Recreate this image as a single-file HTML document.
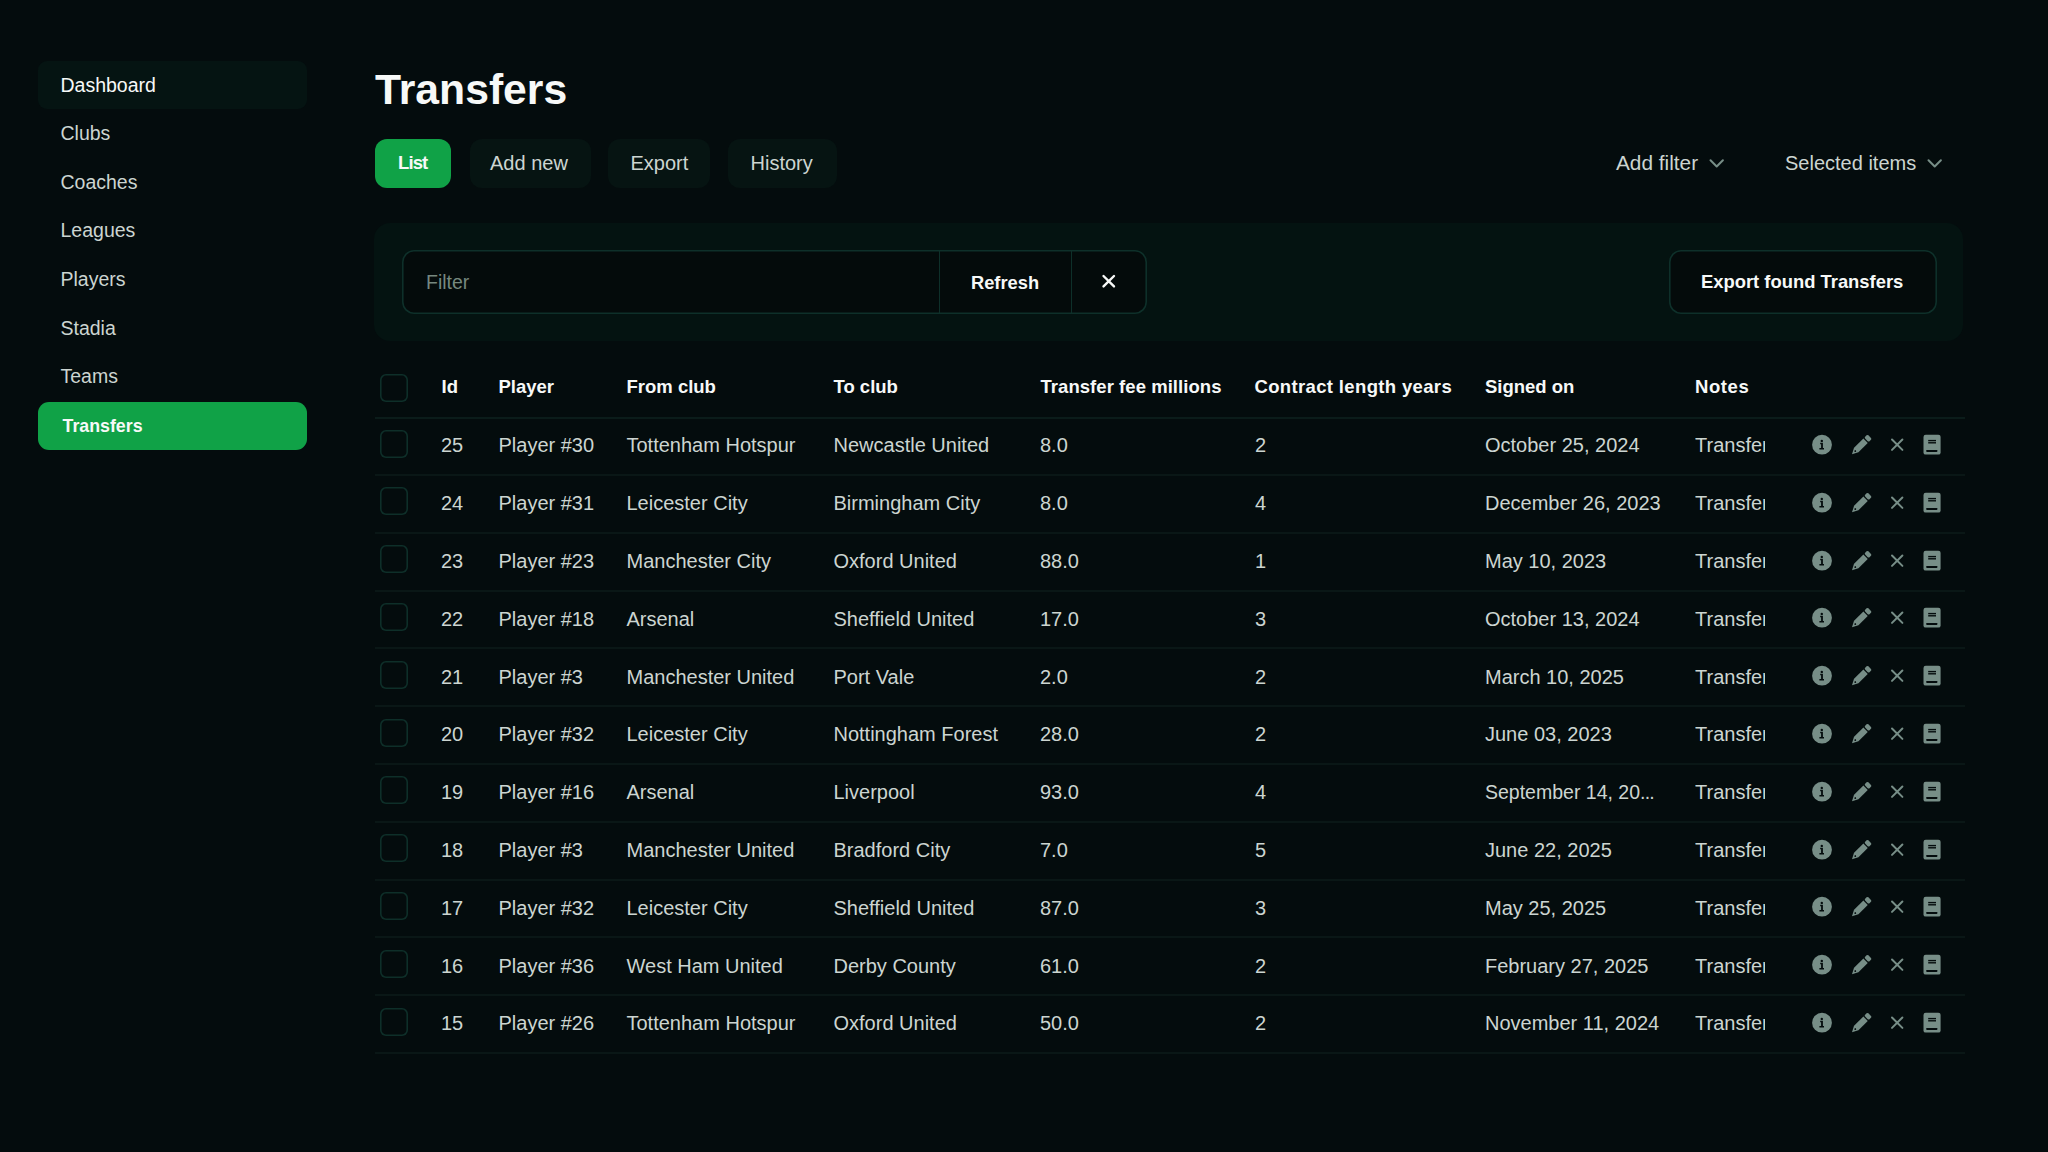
<!DOCTYPE html>
<html><head><meta charset="utf-8"><style>
html,body{margin:0;padding:0;}
body{width:2048px;height:1152px;background:#040c0d;position:relative;overflow:hidden;font-family:"Liberation Sans",sans-serif;}
.t{position:absolute;line-height:1;white-space:nowrap;}
.r{position:absolute;box-sizing:border-box;}
</style></head><body>
<svg width="0" height="0" style="position:absolute"><defs><g id="icons">
<circle cx="22" cy="14.7" r="9.9" fill="#778e87"/>
<circle cx="21.8" cy="10.9" r="1.2" fill="#040c0d"/>
<path d="M20.2 12.8 H22.9 V18 H24 V19.4 H19.4 V18 H21.1 V14.2 H20.2 Z" fill="#040c0d"/>
<g transform="translate(52,24.3) rotate(-45)">
<path d="M0 0 L6 -3.1 L19.2 -3.1 L19.2 3.1 L6 3.1 Z" fill="#778e87"/>
<rect x="20.4" y="-3.1" width="4.6" height="6.2" rx="1.3" fill="#778e87"/>
<circle cx="4.6" cy="0" r="0.9" fill="#040c0d"/>
</g>
<path d="M92 9.5 L102.4 19.9 M102.4 9.5 L92 19.9" stroke="#778e87" stroke-width="2" stroke-linecap="round"/>
<rect x="123.5" y="4.8" width="17.1" height="19.8" rx="2.2" fill="#778e87"/>
<rect x="128.2" y="9.9" width="7.8" height="1.4" fill="#040c0d"/>
<rect x="128.2" y="12.1" width="7.8" height="1.4" fill="#040c0d"/>
<rect x="126.1" y="19.9" width="11.4" height="2" rx="0.8" fill="#040c0d"/>
</g></defs></svg>
<div class="r" style="left:38px;top:61px;width:269px;height:48px;background:#051412;border-radius:9px;"></div>
<div class="r" style="left:38px;top:402px;width:269px;height:48px;background:#10a247;border-radius:11px;"></div>
<div class="t" style="left:60.5px;top:75.5px;font-size:19.5px;color:#f7f9f8;">Dashboard</div>
<div class="t" style="left:60.5px;top:124.1px;font-size:19.5px;color:#ccd5d1;">Clubs</div>
<div class="t" style="left:60.5px;top:172.8px;font-size:19.5px;color:#ccd5d1;">Coaches</div>
<div class="t" style="left:60.5px;top:221.4px;font-size:19.5px;color:#ccd5d1;">Leagues</div>
<div class="t" style="left:60.5px;top:270.0px;font-size:19.5px;color:#ccd5d1;">Players</div>
<div class="t" style="left:60.5px;top:318.7px;font-size:19.5px;color:#ccd5d1;">Stadia</div>
<div class="t" style="left:60.5px;top:367.3px;font-size:19.5px;color:#ccd5d1;">Teams</div>
<div class="t" style="left:62.5px;top:418.4px;font-size:17.8px;font-weight:700;color:#f7f9f8;">Transfers</div>
<div class="t" style="left:375.0px;top:67.8px;font-size:42.7px;font-weight:700;color:#f7f9f8;">Transfers</div>
<div class="r" style="left:375px;top:139px;width:76px;height:49px;background:#10a247;border-radius:12px;"></div>
<div class="t" style="left:398.0px;top:154.3px;font-size:18.5px;font-weight:700;color:#f7f9f8;letter-spacing:-0.9px">List</div>
<div class="r" style="left:470px;top:139px;width:121px;height:49px;background:#061412;border-radius:12px;"></div>
<div class="t" style="left:490.0px;top:153.1px;font-size:20px;color:#ccd5d1;">Add new</div>
<div class="r" style="left:608px;top:139px;width:102px;height:49px;background:#061412;border-radius:12px;"></div>
<div class="t" style="left:630.5px;top:153.1px;font-size:20px;color:#ccd5d1;">Export</div>
<div class="r" style="left:728px;top:139px;width:109px;height:49px;background:#061412;border-radius:12px;"></div>
<div class="t" style="left:750.5px;top:153.1px;font-size:20px;color:#ccd5d1;">History</div>
<div class="t" style="left:1616.0px;top:153.4px;font-size:20.8px;color:#ccd5d1;">Add filter</div>
<div class="t" style="left:1785.0px;top:153.1px;font-size:20px;color:#ccd5d1;">Selected items</div>
<svg class="r" style="left:1709px;top:158px" width="16" height="10" viewBox="0 0 16 10"><path d="M1.5 2.3 L7.7 8.5 L13.9 2.3" fill="none" stroke="#778e87" stroke-width="2" stroke-linecap="round" stroke-linejoin="round"/></svg>
<svg class="r" style="left:1927px;top:158px" width="16" height="10" viewBox="0 0 16 10"><path d="M1.5 2.3 L7.7 8.5 L13.9 2.3" fill="none" stroke="#778e87" stroke-width="2" stroke-linecap="round" stroke-linejoin="round"/></svg>
<div class="r" style="left:374px;top:223px;width:1589px;height:118px;background:#041311;border-radius:16px;"></div>
<div class="r" style="left:402px;top:250px;width:745px;height:64px;box-shadow:inset 0 0 0 1.6px #0e302a;border-radius:12px;background:#040b0b;"></div>
<div class="r" style="left:938.5px;top:251px;width:1.5px;height:62px;background:#0e302a;border-radius:0px;"></div>
<div class="r" style="left:1070.5px;top:251px;width:1.5px;height:62px;background:#0e302a;border-radius:0px;"></div>
<div class="t" style="left:426.0px;top:272.5px;font-size:19.5px;color:#76887f;">Filter</div>
<div class="t" style="left:971.0px;top:273.5px;font-size:18.3px;font-weight:700;color:#f7f9f8;">Refresh</div>
<svg class="r" style="left:1100px;top:273px" width="17" height="16" viewBox="0 0 17 16"><path d="M3.5 3 L14 13.4 M14 3 L3.5 13.4" fill="none" stroke="#f7f9f8" stroke-width="2.4" stroke-linecap="round"/></svg>
<div class="r" style="left:1669px;top:250px;width:268px;height:64px;box-shadow:inset 0 0 0 1.6px #0e302a;border-radius:12px;background:#040b0b;"></div>
<div class="t" style="left:1701.0px;top:273.4px;font-size:18.4px;font-weight:700;color:#f7f9f8;">Export found Transfers</div>
<div class="r" style="left:380px;top:373.5px;width:28px;height:28px;box-shadow:inset 0 0 0 1.6px #0e2f29;border-radius:6px;"></div>
<div class="t" style="left:441.5px;top:377.8px;font-size:18.5px;font-weight:700;color:#f7f9f8;letter-spacing:0.1px">Id</div>
<div class="t" style="left:498.5px;top:377.8px;font-size:18.5px;font-weight:700;color:#f7f9f8;letter-spacing:0px">Player</div>
<div class="t" style="left:626.5px;top:377.8px;font-size:18.5px;font-weight:700;color:#f7f9f8;letter-spacing:0px">From club</div>
<div class="t" style="left:833.5px;top:377.8px;font-size:18.5px;font-weight:700;color:#f7f9f8;letter-spacing:0px">To club</div>
<div class="t" style="left:1040.5px;top:377.8px;font-size:18.5px;font-weight:700;color:#f7f9f8;letter-spacing:0.05px">Transfer fee millions</div>
<div class="t" style="left:1254.5px;top:377.8px;font-size:18.5px;font-weight:700;color:#f7f9f8;letter-spacing:0.35px">Contract length years</div>
<div class="t" style="left:1485.0px;top:377.8px;font-size:18.5px;font-weight:700;color:#f7f9f8;letter-spacing:0px">Signed on</div>
<div class="t" style="left:1695.0px;top:377.8px;font-size:18.5px;font-weight:700;color:#f7f9f8;letter-spacing:0.6px">Notes</div>
<div class="r" style="left:375px;top:417px;width:1590px;height:2px;background:#0b1c1a;border-radius:0px;"></div>
<div class="r" style="left:380px;top:429.6px;width:28px;height:28px;box-shadow:inset 0 0 0 1.6px #0e2f29;border-radius:6px;"></div>
<div class="t" style="left:441.0px;top:435.3px;font-size:20px;color:#ccd5d1;">25</div>
<div class="t" style="left:498.5px;top:435.3px;font-size:20px;color:#ccd5d1;">Player #30</div>
<div class="t" style="left:626.5px;top:435.3px;font-size:20px;color:#ccd5d1;">Tottenham Hotspur</div>
<div class="t" style="left:833.5px;top:435.3px;font-size:20px;color:#ccd5d1;">Newcastle United</div>
<div class="t" style="left:1040.0px;top:435.3px;font-size:20px;color:#ccd5d1;">8.0</div>
<div class="t" style="left:1255.0px;top:435.3px;font-size:20px;color:#ccd5d1;">2</div>
<div class="t" style="left:1485.0px;top:435.3px;font-size:20px;color:#ccd5d1;">October 25, 2024</div>
<div class="t" style="left:1695.0px;top:435.3px;font-size:20px;color:#ccd5d1;width:70px;overflow:hidden;white-space:nowrap">Transfer</div>
<div class="r" style="left:375px;top:474px;width:1590px;height:2px;background:#0a1716;border-radius:0px;"></div>
<svg class="r" style="left:1800px;top:430.0px" width="160" height="30" viewBox="0 0 160 30"><use href="#icons"/></svg>
<div class="r" style="left:380px;top:487.4px;width:28px;height:28px;box-shadow:inset 0 0 0 1.6px #0e2f29;border-radius:6px;"></div>
<div class="t" style="left:441.0px;top:493.1px;font-size:20px;color:#ccd5d1;">24</div>
<div class="t" style="left:498.5px;top:493.1px;font-size:20px;color:#ccd5d1;">Player #31</div>
<div class="t" style="left:626.5px;top:493.1px;font-size:20px;color:#ccd5d1;">Leicester City</div>
<div class="t" style="left:833.5px;top:493.1px;font-size:20px;color:#ccd5d1;">Birmingham City</div>
<div class="t" style="left:1040.0px;top:493.1px;font-size:20px;color:#ccd5d1;">8.0</div>
<div class="t" style="left:1255.0px;top:493.1px;font-size:20px;color:#ccd5d1;">4</div>
<div class="t" style="left:1485.0px;top:493.1px;font-size:20px;color:#ccd5d1;">December 26, 2023</div>
<div class="t" style="left:1695.0px;top:493.1px;font-size:20px;color:#ccd5d1;width:70px;overflow:hidden;white-space:nowrap">Transfer</div>
<div class="r" style="left:375px;top:532px;width:1590px;height:2px;background:#0a1716;border-radius:0px;"></div>
<svg class="r" style="left:1800px;top:487.8px" width="160" height="30" viewBox="0 0 160 30"><use href="#icons"/></svg>
<div class="r" style="left:380px;top:545.2px;width:28px;height:28px;box-shadow:inset 0 0 0 1.6px #0e2f29;border-radius:6px;"></div>
<div class="t" style="left:441.0px;top:550.9px;font-size:20px;color:#ccd5d1;">23</div>
<div class="t" style="left:498.5px;top:550.9px;font-size:20px;color:#ccd5d1;">Player #23</div>
<div class="t" style="left:626.5px;top:550.9px;font-size:20px;color:#ccd5d1;">Manchester City</div>
<div class="t" style="left:833.5px;top:550.9px;font-size:20px;color:#ccd5d1;">Oxford United</div>
<div class="t" style="left:1040.0px;top:550.9px;font-size:20px;color:#ccd5d1;">88.0</div>
<div class="t" style="left:1255.0px;top:550.9px;font-size:20px;color:#ccd5d1;">1</div>
<div class="t" style="left:1485.0px;top:550.9px;font-size:20px;color:#ccd5d1;">May 10, 2023</div>
<div class="t" style="left:1695.0px;top:550.9px;font-size:20px;color:#ccd5d1;width:70px;overflow:hidden;white-space:nowrap">Transfer</div>
<div class="r" style="left:375px;top:590px;width:1590px;height:2px;background:#0a1716;border-radius:0px;"></div>
<svg class="r" style="left:1800px;top:545.6px" width="160" height="30" viewBox="0 0 160 30"><use href="#icons"/></svg>
<div class="r" style="left:380px;top:603.0px;width:28px;height:28px;box-shadow:inset 0 0 0 1.6px #0e2f29;border-radius:6px;"></div>
<div class="t" style="left:441.0px;top:608.7px;font-size:20px;color:#ccd5d1;">22</div>
<div class="t" style="left:498.5px;top:608.7px;font-size:20px;color:#ccd5d1;">Player #18</div>
<div class="t" style="left:626.5px;top:608.7px;font-size:20px;color:#ccd5d1;">Arsenal</div>
<div class="t" style="left:833.5px;top:608.7px;font-size:20px;color:#ccd5d1;">Sheffield United</div>
<div class="t" style="left:1040.0px;top:608.7px;font-size:20px;color:#ccd5d1;">17.0</div>
<div class="t" style="left:1255.0px;top:608.7px;font-size:20px;color:#ccd5d1;">3</div>
<div class="t" style="left:1485.0px;top:608.7px;font-size:20px;color:#ccd5d1;">October 13, 2024</div>
<div class="t" style="left:1695.0px;top:608.7px;font-size:20px;color:#ccd5d1;width:70px;overflow:hidden;white-space:nowrap">Transfer</div>
<div class="r" style="left:375px;top:647px;width:1590px;height:2px;background:#0a1716;border-radius:0px;"></div>
<svg class="r" style="left:1800px;top:603.4px" width="160" height="30" viewBox="0 0 160 30"><use href="#icons"/></svg>
<div class="r" style="left:380px;top:660.8px;width:28px;height:28px;box-shadow:inset 0 0 0 1.6px #0e2f29;border-radius:6px;"></div>
<div class="t" style="left:441.0px;top:666.5px;font-size:20px;color:#ccd5d1;">21</div>
<div class="t" style="left:498.5px;top:666.5px;font-size:20px;color:#ccd5d1;">Player #3</div>
<div class="t" style="left:626.5px;top:666.5px;font-size:20px;color:#ccd5d1;">Manchester United</div>
<div class="t" style="left:833.5px;top:666.5px;font-size:20px;color:#ccd5d1;">Port Vale</div>
<div class="t" style="left:1040.0px;top:666.5px;font-size:20px;color:#ccd5d1;">2.0</div>
<div class="t" style="left:1255.0px;top:666.5px;font-size:20px;color:#ccd5d1;">2</div>
<div class="t" style="left:1485.0px;top:666.5px;font-size:20px;color:#ccd5d1;">March 10, 2025</div>
<div class="t" style="left:1695.0px;top:666.5px;font-size:20px;color:#ccd5d1;width:70px;overflow:hidden;white-space:nowrap">Transfer</div>
<div class="r" style="left:375px;top:705px;width:1590px;height:2px;background:#0a1716;border-radius:0px;"></div>
<svg class="r" style="left:1800px;top:661.2px" width="160" height="30" viewBox="0 0 160 30"><use href="#icons"/></svg>
<div class="r" style="left:380px;top:718.6px;width:28px;height:28px;box-shadow:inset 0 0 0 1.6px #0e2f29;border-radius:6px;"></div>
<div class="t" style="left:441.0px;top:724.3px;font-size:20px;color:#ccd5d1;">20</div>
<div class="t" style="left:498.5px;top:724.3px;font-size:20px;color:#ccd5d1;">Player #32</div>
<div class="t" style="left:626.5px;top:724.3px;font-size:20px;color:#ccd5d1;">Leicester City</div>
<div class="t" style="left:833.5px;top:724.3px;font-size:20px;color:#ccd5d1;">Nottingham Forest</div>
<div class="t" style="left:1040.0px;top:724.3px;font-size:20px;color:#ccd5d1;">28.0</div>
<div class="t" style="left:1255.0px;top:724.3px;font-size:20px;color:#ccd5d1;">2</div>
<div class="t" style="left:1485.0px;top:724.3px;font-size:20px;color:#ccd5d1;">June 03, 2023</div>
<div class="t" style="left:1695.0px;top:724.3px;font-size:20px;color:#ccd5d1;width:70px;overflow:hidden;white-space:nowrap">Transfer</div>
<div class="r" style="left:375px;top:763px;width:1590px;height:2px;background:#0a1716;border-radius:0px;"></div>
<svg class="r" style="left:1800px;top:719.0px" width="160" height="30" viewBox="0 0 160 30"><use href="#icons"/></svg>
<div class="r" style="left:380px;top:776.4px;width:28px;height:28px;box-shadow:inset 0 0 0 1.6px #0e2f29;border-radius:6px;"></div>
<div class="t" style="left:441.0px;top:782.1px;font-size:20px;color:#ccd5d1;">19</div>
<div class="t" style="left:498.5px;top:782.1px;font-size:20px;color:#ccd5d1;">Player #16</div>
<div class="t" style="left:626.5px;top:782.1px;font-size:20px;color:#ccd5d1;">Arsenal</div>
<div class="t" style="left:833.5px;top:782.1px;font-size:20px;color:#ccd5d1;">Liverpool</div>
<div class="t" style="left:1040.0px;top:782.1px;font-size:20px;color:#ccd5d1;">93.0</div>
<div class="t" style="left:1255.0px;top:782.1px;font-size:20px;color:#ccd5d1;">4</div>
<div class="t" style="left:1485.0px;top:782.5px;font-size:19.5px;color:#ccd5d1;">September 14, 20<span style="letter-spacing:-0.8px">...</span></div>
<div class="t" style="left:1695.0px;top:782.1px;font-size:20px;color:#ccd5d1;width:70px;overflow:hidden;white-space:nowrap">Transfer</div>
<div class="r" style="left:375px;top:821px;width:1590px;height:2px;background:#0a1716;border-radius:0px;"></div>
<svg class="r" style="left:1800px;top:776.8px" width="160" height="30" viewBox="0 0 160 30"><use href="#icons"/></svg>
<div class="r" style="left:380px;top:834.2px;width:28px;height:28px;box-shadow:inset 0 0 0 1.6px #0e2f29;border-radius:6px;"></div>
<div class="t" style="left:441.0px;top:839.9px;font-size:20px;color:#ccd5d1;">18</div>
<div class="t" style="left:498.5px;top:839.9px;font-size:20px;color:#ccd5d1;">Player #3</div>
<div class="t" style="left:626.5px;top:839.9px;font-size:20px;color:#ccd5d1;">Manchester United</div>
<div class="t" style="left:833.5px;top:839.9px;font-size:20px;color:#ccd5d1;">Bradford City</div>
<div class="t" style="left:1040.0px;top:839.9px;font-size:20px;color:#ccd5d1;">7.0</div>
<div class="t" style="left:1255.0px;top:839.9px;font-size:20px;color:#ccd5d1;">5</div>
<div class="t" style="left:1485.0px;top:839.9px;font-size:20px;color:#ccd5d1;">June 22, 2025</div>
<div class="t" style="left:1695.0px;top:839.9px;font-size:20px;color:#ccd5d1;width:70px;overflow:hidden;white-space:nowrap">Transfer</div>
<div class="r" style="left:375px;top:879px;width:1590px;height:2px;background:#0a1716;border-radius:0px;"></div>
<svg class="r" style="left:1800px;top:834.6px" width="160" height="30" viewBox="0 0 160 30"><use href="#icons"/></svg>
<div class="r" style="left:380px;top:892.0px;width:28px;height:28px;box-shadow:inset 0 0 0 1.6px #0e2f29;border-radius:6px;"></div>
<div class="t" style="left:441.0px;top:897.7px;font-size:20px;color:#ccd5d1;">17</div>
<div class="t" style="left:498.5px;top:897.7px;font-size:20px;color:#ccd5d1;">Player #32</div>
<div class="t" style="left:626.5px;top:897.7px;font-size:20px;color:#ccd5d1;">Leicester City</div>
<div class="t" style="left:833.5px;top:897.7px;font-size:20px;color:#ccd5d1;">Sheffield United</div>
<div class="t" style="left:1040.0px;top:897.7px;font-size:20px;color:#ccd5d1;">87.0</div>
<div class="t" style="left:1255.0px;top:897.7px;font-size:20px;color:#ccd5d1;">3</div>
<div class="t" style="left:1485.0px;top:897.7px;font-size:20px;color:#ccd5d1;">May 25, 2025</div>
<div class="t" style="left:1695.0px;top:897.7px;font-size:20px;color:#ccd5d1;width:70px;overflow:hidden;white-space:nowrap">Transfer</div>
<div class="r" style="left:375px;top:936px;width:1590px;height:2px;background:#0a1716;border-radius:0px;"></div>
<svg class="r" style="left:1800px;top:892.4px" width="160" height="30" viewBox="0 0 160 30"><use href="#icons"/></svg>
<div class="r" style="left:380px;top:949.8px;width:28px;height:28px;box-shadow:inset 0 0 0 1.6px #0e2f29;border-radius:6px;"></div>
<div class="t" style="left:441.0px;top:955.5px;font-size:20px;color:#ccd5d1;">16</div>
<div class="t" style="left:498.5px;top:955.5px;font-size:20px;color:#ccd5d1;">Player #36</div>
<div class="t" style="left:626.5px;top:955.5px;font-size:20px;color:#ccd5d1;">West Ham United</div>
<div class="t" style="left:833.5px;top:955.5px;font-size:20px;color:#ccd5d1;">Derby County</div>
<div class="t" style="left:1040.0px;top:955.5px;font-size:20px;color:#ccd5d1;">61.0</div>
<div class="t" style="left:1255.0px;top:955.5px;font-size:20px;color:#ccd5d1;">2</div>
<div class="t" style="left:1485.0px;top:955.5px;font-size:20px;color:#ccd5d1;">February 27, 2025</div>
<div class="t" style="left:1695.0px;top:955.5px;font-size:20px;color:#ccd5d1;width:70px;overflow:hidden;white-space:nowrap">Transfer</div>
<div class="r" style="left:375px;top:994px;width:1590px;height:2px;background:#0a1716;border-radius:0px;"></div>
<svg class="r" style="left:1800px;top:950.2px" width="160" height="30" viewBox="0 0 160 30"><use href="#icons"/></svg>
<div class="r" style="left:380px;top:1007.6px;width:28px;height:28px;box-shadow:inset 0 0 0 1.6px #0e2f29;border-radius:6px;"></div>
<div class="t" style="left:441.0px;top:1013.3px;font-size:20px;color:#ccd5d1;">15</div>
<div class="t" style="left:498.5px;top:1013.3px;font-size:20px;color:#ccd5d1;">Player #26</div>
<div class="t" style="left:626.5px;top:1013.3px;font-size:20px;color:#ccd5d1;">Tottenham Hotspur</div>
<div class="t" style="left:833.5px;top:1013.3px;font-size:20px;color:#ccd5d1;">Oxford United</div>
<div class="t" style="left:1040.0px;top:1013.3px;font-size:20px;color:#ccd5d1;">50.0</div>
<div class="t" style="left:1255.0px;top:1013.3px;font-size:20px;color:#ccd5d1;">2</div>
<div class="t" style="left:1485.0px;top:1013.3px;font-size:20px;color:#ccd5d1;">November 11, 2024</div>
<div class="t" style="left:1695.0px;top:1013.3px;font-size:20px;color:#ccd5d1;width:70px;overflow:hidden;white-space:nowrap">Transfer</div>
<div class="r" style="left:375px;top:1052px;width:1590px;height:2px;background:#0a1716;border-radius:0px;"></div>
<svg class="r" style="left:1800px;top:1008.0px" width="160" height="30" viewBox="0 0 160 30"><use href="#icons"/></svg>
</body></html>
